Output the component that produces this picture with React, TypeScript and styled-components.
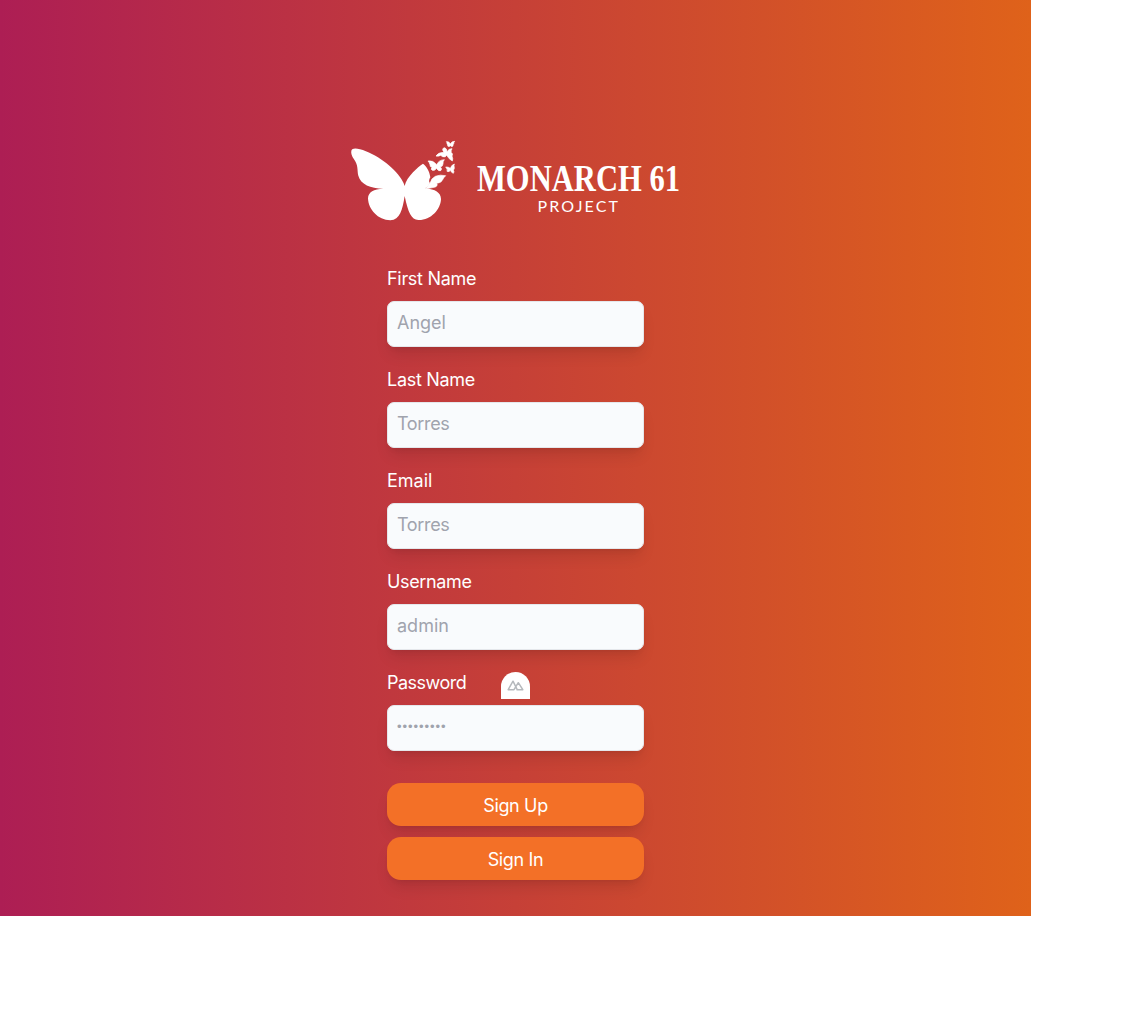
import React from "react";
import styled, { createGlobalStyle } from "styled-components";

const GlobalStyle = createGlobalStyle`
  *, *::before, *::after { box-sizing: border-box; }
  body { margin: 0; background: #fff; }
`;

const Page = styled.main`
  position: relative;
  display: flex;
  flex-direction: column;
  align-items: center;
  width: 1031px;
  height: 916px;
  padding-top: 130px;
  background: linear-gradient(to right, #ad1e54, #c64037 50%, #df621a);
  font-family: Inter, "Liberation Sans", sans-serif;
`;

const Logo = styled.svg`
  display: block;
  width: 350px;
  height: 100px;
  margin-right: 1px;
  fill: #fff;
  overflow: visible;
`;

const Form = styled.form`
  display: flex;
  flex-direction: column;
  width: 257px;
  margin-top: 35px;
`;

const Field = styled.div`
  display: flex;
  flex-direction: column;
  height: 101px;
`;

const Label = styled.label<{ $spacing: number }>`
  height: 36px;
  color: #fff;
  font-size: 18px;
  line-height: 28px;
  letter-spacing: ${({ $spacing }) => $spacing}px;
`;

const Input = styled.input<{ $spacing: number }>`
  width: 100%;
  height: 46px;
  padding: 0 9px 3px;
  border: 1px solid #e5e7eb;
  border-radius: 7px;
  outline: none;
  background: #f9fbfd;
  box-shadow: 0 10px 15px -3px rgba(0, 0, 0, 0.1), 0 4px 6px -4px rgba(0, 0, 0, 0.1);
  font-family: ${({ type }) => (type === "password" ? '"Liberation Sans", sans-serif' : 'Inter, sans-serif')};
  font-size: ${({ type }) => (type === "password" ? 13 : 18)}px;
  letter-spacing: ${({ $spacing }) => $spacing}px;

  &::placeholder { color: #a0a3ad; opacity: 1; }
`;

const Actions = styled.div`
  display: flex;
  flex-direction: column;
  gap: 11px;
  margin-top: 13px;
`;

const Button = styled.button`
  height: 43px;
  padding: 2px 0 0;
  border: 0;
  border-radius: 14px;
  background: #f37027;
  color: #fff;
  box-shadow: 0 10px 15px -3px rgba(0, 0, 0, 0.1), 0 4px 6px -4px rgba(0, 0, 0, 0.1);
  font-family: Inter, sans-serif;
  font-size: 18px;
  letter-spacing: -0.35px;
`;

const DevBadge = styled.div`
  position: absolute;
  left: 501px;
  top: 672px;
  display: flex;
  align-items: center;
  justify-content: center;
  width: 29px;
  height: 27px;
  border-radius: 15px 15px 0 0;
  background: #fff;
`;

const fields = [
  { id: "first", label: "First Name", placeholder: "Angel", type: "text", ls: -0.3, ps: 0 },
  { id: "last", label: "Last Name", placeholder: "Torres", type: "text", ls: -0.3, ps: -0.35 },
  { id: "email", label: "Email", placeholder: "Torres", type: "text", ls: 0, ps: -0.35 },
  { id: "username", label: "Username", placeholder: "admin", type: "text", ls: -0.35, ps: 0 },
  { id: "password", label: "Password", placeholder: "•••••••••", type: "password", ls: -0.5, ps: 0.95 },
];

function BrandLogo() {
  return (
    <Logo viewBox="0 0 350 100" role="img" aria-label="Monarch 61 Project">
      <g transform="scale(0.33333)">
        <path d="M34 62C36 54 48 54 60 58C106 70 163 112 184 147Q191 158 194 168C197 154 206 141 219 127C229 116 241 105 249 101C259 108 269 124 271 142Q265 152 269 159Q266 168 256 175C286 178 302 187 303 207C302 239 272 271 235 270C214 269 204 247 194 198C187 241 180 269 151 271C114 270 85 239 84 205C85 185 101 177 130 176C91 175 62 163 55 137C51 120 56 106 41 86Q32 73 34 62Z" />
        <g stroke="#fff" strokeWidth="2" strokeLinejoin="round">
          <path d="M272 155Q275 145 286 139Q300 133 317 137Q310 143 307 151Q303 159 290 160Q295 167 286 171Q270 175 257 176L263 167Z" />
          <path d="M264 93Q279 90 290 104Q296 90 313 89Q308 94 309 102Q308 110 301 111Q308 117 302 122Q296 125 289 115Q286 123 277 121Q271 119 276 112Q269 111 270 104Q268 97 264 93Z" />
          <path d="M288 78Q294 67 312 67Q303 55 314 53Q321 55 321 66Q326 55 336 56Q332 62 334 68Q340 71 336 78Q340 87 337 93Q327 88 320 76Q317 83 308 80Q302 78 304 75Q296 80 288 78Z" />
          <path d="M319 35Q326 34 331 41Q336 34 344 34Q341 37 341 42Q338 44 339 48Q335 52 331 47Q327 52 323 48Q325 45 321 42Q322 38 319 35Z" />
          <path d="M317 111Q325 110 331 115Q334 105 343 102Q341 107 343 113Q343 118 340 120Q344 126 340 130Q334 128 331 121Q328 127 321 124Q320 122 323 119Q318 118 320 115Z" />
        </g>
      </g>
      <text x="137" y="60.5" fontFamily='"Liberation Serif", serif' fontSize="37" fontWeight="700" textLength="203" lengthAdjust="spacingAndGlyphs">MONARCH 61</text>
      <text x="197.5" y="82" fontFamily="Lato, sans-serif" fontSize="16" textLength="80.5">PROJECT</text>
    </Logo>
  );
}

export default function App() {
  return (
    <>
      <GlobalStyle />
      <Page>
        <BrandLogo />
        <Form onSubmit={(e) => e.preventDefault()}>
          {fields.map((f) => (
            <Field key={f.id}>
              <Label htmlFor={f.id} $spacing={f.ls}>{f.label}</Label>
              <Input id={f.id} type={f.type} placeholder={f.placeholder} $spacing={f.ps} />
            </Field>
          ))}
          <Actions>
            <Button>Sign Up</Button>
            <Button>Sign In</Button>
          </Actions>
        </Form>
        <DevBadge>
          <svg width="17" height="12" viewBox="0 0 17 12" fill="none" stroke="#b5b9bd" strokeWidth="1.5" strokeLinejoin="round">
            <path d="M5.8 9.7H1.2L6 1.2L10.2 9.7M9.5 9.7H15.8L11.3 2.7L7 9.7H5" />
          </svg>
        </DevBadge>
      </Page>
    </>
  );
}
